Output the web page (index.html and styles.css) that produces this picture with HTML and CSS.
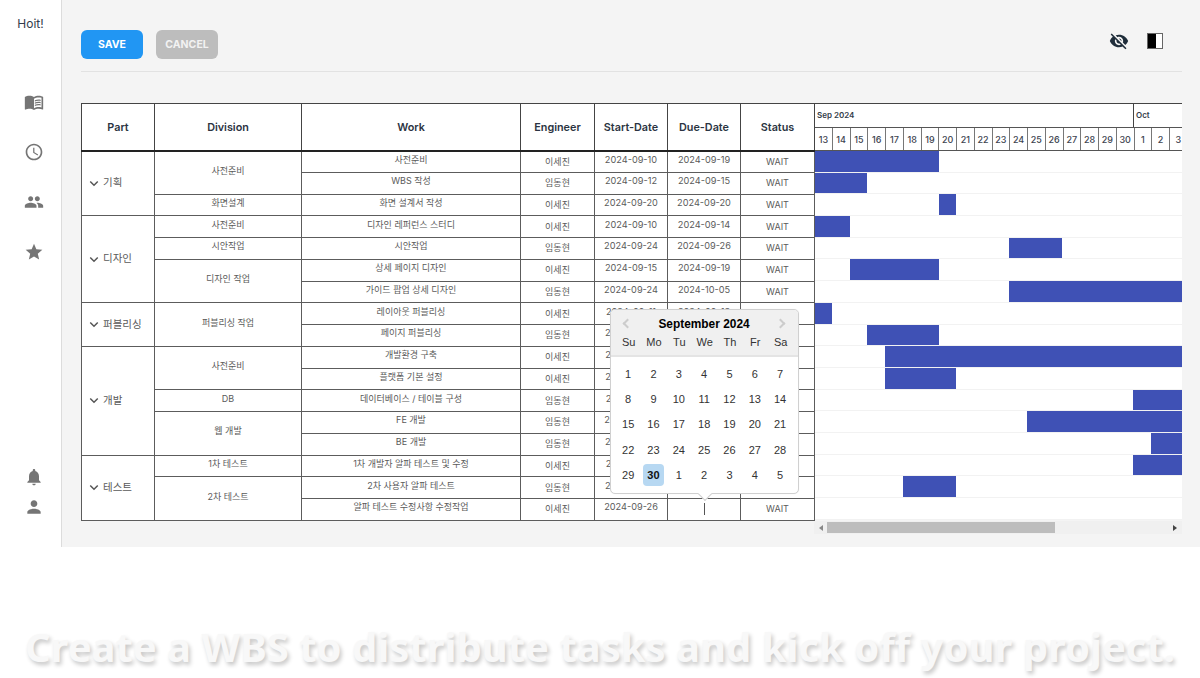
FILE: index.html
```html
<!DOCTYPE html>
<html lang="ko">
<head>
<meta charset="utf-8">
<title>Hoit! WBS</title>
<link rel="stylesheet" href="styles.css">
</head>
<body>
<div class="app">
  <aside class="sidebar">
    <div class="logo">Hoit!</div>
    <nav class="nav-top">
      <svg class="ico" viewBox="0 0 24 24"><path d="M21 5c-1.11-.35-2.33-.5-3.5-.5-1.95 0-4.05.4-5.5 1.5-1.45-1.1-3.55-1.5-5.5-1.5S2.45 4.9 1 6v14.65c0 .25.25.5.5.5.1 0 .15-.05.25-.05C3.1 20.45 5.05 20 6.5 20c1.95 0 4.05.4 5.5 1.5 1.35-.85 3.8-1.5 5.5-1.5 1.65 0 3.35.3 4.75 1.05.1.05.15.05.25.05.25 0 .5-.25.5-.5V6c-.6-.45-1.25-.75-2-1zm0 13.5c-1.1-.35-2.3-.5-3.5-.5-1.7 0-4.15.65-5.5 1.5V8c1.35-.85 3.8-1.5 5.5-1.5 1.2 0 2.4.15 3.5.5v11.5z"/><path d="M17.5 10.5c.88 0 1.73.09 2.5.26V9.24c-.79-.15-1.64-.24-2.5-.24-1.7 0-3.24.29-4.5.83v1.66c1.13-.64 2.7-.99 4.5-.99zM13 12.49v1.66c1.13-.64 2.7-.99 4.5-.99.88 0 1.73.09 2.5.26V11.9c-.79-.15-1.64-.24-2.5-.24-1.7 0-3.24.3-4.5.83zM17.5 14.33c-1.7 0-3.24.29-4.5.83v1.66c1.13-.64 2.7-.99 4.5-.99.88 0 1.73.09 2.5.26v-1.52c-.79-.16-1.64-.24-2.5-.24z"/></svg>
      <svg class="ico" viewBox="0 0 24 24"><path d="M11.99 2C6.47 2 2 6.48 2 12s4.47 10 9.99 10C17.52 22 22 17.52 22 12S17.52 2 11.99 2zM12 20c-4.42 0-8-3.58-8-8s3.58-8 8-8 8 3.58 8 8-3.58 8-8 8z"/><path d="M12.5 7H11v6l5.25 3.15.75-1.23-4.5-2.67z"/></svg>
      <svg class="ico" viewBox="0 0 24 24"><path d="M16 11c1.66 0 2.99-1.34 2.99-3S17.66 5 16 5c-1.66 0-3 1.34-3 3s1.34 3 3 3zm-8 0c1.66 0 2.99-1.34 2.99-3S9.66 5 8 5C6.34 5 5 6.34 5 8s1.34 3 3 3zm0 2c-2.33 0-7 1.17-7 3.5V19h14v-2.5c0-2.33-4.67-3.5-7-3.5zm8 0c-.29 0-.62.02-.97.05 1.16.84 1.97 1.97 1.97 3.45V19h6v-2.5c0-2.33-4.67-3.5-7-3.5z"/></svg>
      <svg class="ico" viewBox="0 0 24 24"><path d="M12 17.27 18.18 21l-1.64-7.03L22 9.24l-7.19-.61L12 2 9.19 8.63 2 9.24l5.46 4.73L5.82 21z"/></svg>
    </nav>
    <div class="nav-bottom">
      <svg class="ico" viewBox="0 0 24 24"><path d="M12 22c1.1 0 2-.9 2-2h-4c0 1.1.89 2 2 2zm6-6v-5c0-3.07-1.64-5.64-4.5-6.32V4c0-.83-.67-1.5-1.5-1.5s-1.5.67-1.5 1.5v.68C7.63 5.36 6 7.92 6 11v5l-2 2v1h16v-1l-2-2z"/></svg>
      <svg class="ico" viewBox="0 0 24 24"><path d="M12 12c2.21 0 4-1.79 4-4s-1.79-4-4-4-4 1.79-4 4 1.79 4 4 4zm0 2c-2.67 0-8 1.34-8 4v2h16v-2c0-2.66-5.33-4-8-4z"/></svg>
    </div>
  </aside>

  <main class="main">
    <header class="toolbar">
      <div class="actions">
        <button class="btn btn-save">SAVE</button>
        <button class="btn btn-cancel">CANCEL</button>
      </div>
      <div class="tools">
        <svg class="tool-eye" viewBox="0 0 24 24"><path d="M12 7c2.76 0 5 2.24 5 5 0 .65-.13 1.26-.36 1.83l2.92 2.92c1.51-1.26 2.7-2.89 3.43-4.75-1.73-4.39-6-7.5-11-7.5-1.4 0-2.74.25-3.98.7l2.16 2.16C10.74 7.13 11.35 7 12 7zM2 4.27l2.28 2.28.46.46C3.08 8.3 1.78 10.02 1 12c1.73 4.39 6 7.5 11 7.5 1.55 0 3.03-.3 4.38-.84l.42.42L19.73 22 21 20.73 3.27 3 2 4.27zM7.53 9.8l1.55 1.55c-.05.21-.08.43-.08.65 0 1.66 1.34 3 3 3 .22 0 .44-.03.65-.08l1.55 1.55c-.67.33-1.41.53-2.2.53-2.76 0-5-2.24-5-5 0-.79.2-1.53.53-2.2zm4.31-.78 3.15 3.15.02-.16c0-1.66-1.34-3-3-3l-.17.01z"/></svg>
        <div class="tool-split"><span class="tool-split-fill"></span></div>
      </div>
    </header>

    <section class="board">
      <table class="wbs">
        <colgroup>
          <col class="c-part"><col class="c-div"><col class="c-work"><col class="c-eng"><col class="c-date"><col class="c-date"><col class="c-status">
        </colgroup>
        <thead>
          <tr><th>Part</th><th>Division</th><th>Work</th><th>Engineer</th><th>Start-Date</th><th>Due-Date</th><th>Status</th></tr>
        </thead>
        <tbody>
          <tr><td class="part" rowspan="3"><span class="part-in"><svg class="chev" viewBox="0 0 12 8"><path d="M1.5 1.5 6 6l4.5-4.5"/></svg>기획</span></td><td class="up" rowspan="2">사전준비</td><td class="up">사전준비</td><td>이세진</td><td class="up date">2024-09-10</td><td class="up date">2024-09-19</td><td class="st">WAIT</td></tr>
          <tr><td class="up">WBS 작성</td><td>임동현</td><td class="up date">2024-09-12</td><td class="up date">2024-09-15</td><td class="st">WAIT</td></tr>
          <tr><td class="up">화면설계</td><td class="up">화면 설계서 작성</td><td>이세진</td><td class="up date">2024-09-20</td><td class="up date">2024-09-20</td><td class="st">WAIT</td></tr>
          <tr><td class="part" rowspan="4"><span class="part-in"><svg class="chev" viewBox="0 0 12 8"><path d="M1.5 1.5 6 6l4.5-4.5"/></svg>디자인</span></td><td class="up">사전준비</td><td class="up">디자인 레퍼런스 스터디</td><td>이세진</td><td class="up date">2024-09-10</td><td class="up date">2024-09-14</td><td class="st">WAIT</td></tr>
          <tr><td class="up">시안작업</td><td class="up">시안작업</td><td>임동현</td><td class="up date">2024-09-24</td><td class="up date">2024-09-26</td><td class="st">WAIT</td></tr>
          <tr><td class="up" rowspan="2">디자인 작업</td><td class="up">상세 페이지 디자인</td><td>이세진</td><td class="up date">2024-09-15</td><td class="up date">2024-09-19</td><td class="st">WAIT</td></tr>
          <tr><td class="up">가이드 팝업 상세 디자인</td><td>임동현</td><td class="up date">2024-09-24</td><td class="up date">2024-10-05</td><td class="st">WAIT</td></tr>
          <tr><td class="part" rowspan="2"><span class="part-in"><svg class="chev" viewBox="0 0 12 8"><path d="M1.5 1.5 6 6l4.5-4.5"/></svg>퍼블리싱</span></td><td class="up" rowspan="2">퍼블리싱 작업</td><td class="up">레이아웃 퍼블리싱</td><td>이세진</td><td class="up date">2024-09-11</td><td class="up date">2024-09-13</td><td class="st">WAIT</td></tr>
          <tr><td class="up">페이지 퍼블리싱</td><td>임동현</td><td class="up date">2024-09-16</td><td class="up date">2024-09-19</td><td class="st">WAIT</td></tr>
          <tr><td class="part" rowspan="5"><span class="part-in"><svg class="chev" viewBox="0 0 12 8"><path d="M1.5 1.5 6 6l4.5-4.5"/></svg>개발</span></td><td class="up" rowspan="2">사전준비</td><td class="up">개발환경 구축</td><td>이세진</td><td class="up date">2024-09-17</td><td class="up date">2024-10-10</td><td class="st">WAIT</td></tr>
          <tr><td class="up">플랫폼 기본 설정</td><td>이세진</td><td class="up date">2024-09-17</td><td class="up date">2024-09-20</td><td class="st">WAIT</td></tr>
          <tr><td class="up">DB</td><td class="up">데이터베이스 / 테이블 구성</td><td>임동현</td><td class="up date">2024-10-01</td><td class="up date">2024-10-10</td><td class="st">WAIT</td></tr>
          <tr><td class="up" rowspan="2">웹 개발</td><td class="up">FE 개발</td><td>임동현</td><td class="up date">2024-09-25</td><td class="up date">2024-10-10</td><td class="st">WAIT</td></tr>
          <tr><td class="up">BE 개발</td><td>임동현</td><td class="up date">2024-10-02</td><td class="up date">2024-10-10</td><td class="st">WAIT</td></tr>
          <tr><td class="part" rowspan="3"><span class="part-in"><svg class="chev" viewBox="0 0 12 8"><path d="M1.5 1.5 6 6l4.5-4.5"/></svg>테스트</span></td><td class="up">1차 테스트</td><td class="up">1차 개발자 알파 테스트 및 수정</td><td>이세진</td><td class="up date">2024-10-01</td><td class="up date">2024-10-10</td><td class="st">WAIT</td></tr>
          <tr><td class="up" rowspan="2">2차 테스트</td><td class="up">2차 사용자 알파 테스트</td><td>임동현</td><td class="up date">2024-09-18</td><td class="up date">2024-09-20</td><td class="st">WAIT</td></tr>
          <tr><td class="up">알파 테스트 수정사항 수정작업</td><td>이세진</td><td class="up date">2024-09-26</td><td class="up date"><span class="caret"></span></td><td class="st">WAIT</td></tr>
        </tbody>
      </table>

      <div class="gantt">
        <div class="g-head">
          <div class="g-months">
            <div class="g-sep">Sep 2024</div>
            <div class="g-oct">Oct</div>
          </div>
          <div class="g-days">
            <span>13</span><span>14</span><span>15</span><span>16</span><span>17</span><span>18</span><span>19</span><span>20</span><span>21</span><span>22</span><span>23</span><span>24</span><span>25</span><span>26</span><span>27</span><span>28</span><span>29</span><span>30</span><span>1</span><span>2</span><span>3</span>
          </div>
        </div>
        <div class="g-body">
          <div class="g-row"><i class="bar" style="margin-left:0;width:125px"></i></div>
          <div class="g-row"><i class="bar" style="margin-left:0;width:53px"></i></div>
          <div class="g-row"><i class="bar" style="margin-left:125px;width:17px"></i></div>
          <div class="g-row"><i class="bar" style="margin-left:0;width:36px"></i></div>
          <div class="g-row"><i class="bar" style="margin-left:195px;width:53px"></i></div>
          <div class="g-row"><i class="bar" style="margin-left:36px;width:89px"></i></div>
          <div class="g-row"><i class="bar" style="margin-left:195px;width:173px"></i></div>
          <div class="g-row"><i class="bar" style="margin-left:0;width:18px"></i></div>
          <div class="g-row"><i class="bar" style="margin-left:53px;width:72px"></i></div>
          <div class="g-row"><i class="bar" style="margin-left:71px;width:297px"></i></div>
          <div class="g-row"><i class="bar" style="margin-left:71px;width:71px"></i></div>
          <div class="g-row"><i class="bar" style="margin-left:319px;width:49px"></i></div>
          <div class="g-row"><i class="bar" style="margin-left:213px;width:155px"></i></div>
          <div class="g-row"><i class="bar" style="margin-left:337px;width:31px"></i></div>
          <div class="g-row"><i class="bar" style="margin-left:319px;width:49px"></i></div>
          <div class="g-row"><i class="bar" style="margin-left:89px;width:53px"></i></div>
          <div class="g-row"></div>
        </div>
        <div class="scrollbar">
          <span class="sb-arrow sb-left"></span>
          <div class="sb-track"><div class="sb-thumb"></div></div>
          <span class="sb-arrow sb-right"></span>
        </div>
      </div>

      <div class="picker">
        <div class="picker-head">
          <div class="picker-title">
            <span class="pk-nav pk-prev"></span>
            <span>September 2024</span>
            <span class="pk-nav pk-next"></span>
          </div>
          <div class="pk-week"><span>Su</span><span>Mo</span><span>Tu</span><span>We</span><span>Th</span><span>Fr</span><span>Sa</span></div>
        </div>
        <div class="pk-grid">
          <span>1</span><span>2</span><span>3</span><span>4</span><span>5</span><span>6</span><span>7</span>
          <span>8</span><span>9</span><span>10</span><span>11</span><span>12</span><span>13</span><span>14</span>
          <span>15</span><span>16</span><span>17</span><span>18</span><span>19</span><span>20</span><span>21</span>
          <span>22</span><span>23</span><span>24</span><span>25</span><span>26</span><span>27</span><span>28</span>
          <span>29</span><span class="pk-sel">30</span><span>1</span><span>2</span><span>3</span><span>4</span><span>5</span>
        </div>
        <span class="pk-tip"></span>
      </div>
    </section>
  </main>
</div>
<footer class="caption">Create a WBS to distribute tasks and kick off your project.</footer>
</body>
</html>
```
FILE: styles.css
```css
* { box-sizing: border-box; }
html, body { margin: 0; padding: 0; background: #fff; }
body { width: 1200px; height: 678px; overflow: hidden; font-family: Inter, "Noto Sans CJK KR", sans-serif; color: #333; }

.app { display: flex; height: 547px; }

.sidebar { width: 62px; flex: none; background: #fff; border-right: 1px solid #dcdcdc; display: flex; flex-direction: column; align-items: center; padding-top: 15px; padding-bottom: 30px; }
.logo { font-size: 12px; line-height: 18px; color: #333c4a; }
.nav-top { display: flex; flex-direction: column; align-items: center; gap: 30px; margin-top: 59px; padding-left: 6px; }
.nav-bottom { display: flex; flex-direction: column; align-items: center; gap: 10px; margin-top: auto; padding-left: 6px; }
.ico { width: 20px; height: 20px; fill: #757575; display: block; }

.main { flex: 1; min-width: 0; background: #f4f4f4; padding: 0 18px 0 19px; }
.toolbar { height: 72px; border-bottom: 1px solid #e2e2e2; display: flex; justify-content: space-between; align-items: flex-start; padding-top: 30px; }
.actions { display: flex; gap: 13px; }
.btn { width: 62px; height: 29px; border: 0; border-radius: 6px; font: 700 10.5px Inter, sans-serif; color: #fff; padding: 0; }
.btn-save { background: #2196f3; }
.btn-cancel { background: #bdbdbd; color: #f2f2f2; }
.tools { display: flex; align-items: center; gap: 18px; padding-right: 19px; margin-top: 1px; }
.tool-eye { width: 20px; height: 20px; fill: #1f2d3a; display: block; }
.tool-split { width: 16px; height: 16px; border: 1px solid #666; background: #fff; display: flex; }
.tool-split-fill { width: 8px; background: #000; }

.board { position: relative; display: flex; align-items: flex-start; margin-top: 31px; }

.wbs { position: relative; z-index: 1; width: 733px; flex: none; border-collapse: collapse; table-layout: fixed; background: #fff; }
.c-part { width: 73px; } .c-div { width: 147px; } .c-work { width: 219px; } .c-eng { width: 74px; } .c-date { width: 73px; } .c-status { width: 74px; }
.wbs th { height: 47px; border: 1px solid #444; border-bottom: 2px solid #222; font-size: 10.8px; font-weight: 600; color: #2b3442; padding: 1px 0 0; text-align: center; }
.wbs td { height: 21.75px; border: 1px solid #5c5c5c; padding: 0; font-size: 9px; line-height: 12px; color: #5a5a5a; text-align: center; overflow: hidden; white-space: nowrap; }
.wbs td.up { padding-bottom: 4px; }
.wbs td.date { font-size: 9.2px; }
.wbs td.st { font-size: 9px; }
.wbs td.part { text-align: left; font-size: 10.5px; padding-left: 7px; }
.part-in { display: flex; align-items: center; gap: 4px; }
.chev { width: 10px; height: 7px; fill: none; stroke: #555; stroke-width: 1.8; flex: none; }
.caret { display: inline-block; width: 1px; height: 12px; background: #555; vertical-align: middle; margin-top: 4px; }

.gantt { width: 368px; flex: none; margin-left: -1px; }
.g-head { height: 48px; background: #fff; border-top: 1px solid #444; }
.g-months { height: 24px; display: flex; border-bottom: 1px solid #555; font-size: 8px; font-weight: 600; color: #333c4a; }
.g-sep { width: 320px; padding: 6px 0 0 3px; border-right: 1px solid #444; }
.g-oct { flex: 1; padding: 6px 0 0 2px; }
.g-days { height: 23px; display: grid; grid-template-columns: repeat(21, 17.75px); padding-left: 1px; border-bottom: 1px solid #555; overflow: hidden; }
.g-days span { font-size: 9px; font-weight: 500; color: #3d4450; border-right: 1px solid #777; display: flex; align-items: center; justify-content: center; }
.g-body { background: #fff; height: 369px; }
.g-row { height: 21.7px; border-bottom: 1px solid #f2f2f2; display: flex; }
.bar { display: block; height: 100%; background: #3f51b5; }

.scrollbar { height: 13px; margin-top: 1px; background: #f0f0f0; display: flex; align-items: center; }
.sb-arrow { width: 0; height: 0; border-top: 3px solid transparent; border-bottom: 3px solid transparent; flex: none; }
.sb-left { border-right: 4px solid #888; margin-left: 5px; margin-right: 4px; }
.sb-right { border-left: 4px solid #444; margin-left: 4px; margin-right: 5px; }
.sb-track { flex: 1; height: 11px; }
.sb-thumb { width: 228px; height: 100%; background: #bdbdbd; }

.picker { position: absolute; z-index: 2; left: 529px; top: 206px; width: 189px; height: 185px; background: #fff; border: 1px solid #d0d0d0; border-radius: 5px; font-family: "Liberation Sans", sans-serif; box-shadow: 0 0 1px rgba(0,0,0,.1); }
.picker-head { height: 47px; background: #f0f0f0; border-bottom: 2px solid #e4e4e4; border-radius: 4px 4px 0 0; }
.picker-title { display: flex; justify-content: space-between; align-items: center; height: 24px; padding: 3px 14px 0 13px; font-size: 11.9px; font-weight: 700; color: #000; }
.pk-nav { width: 7px; height: 7px; border-top: 2px solid #ccc; border-left: 2px solid #ccc; }
.pk-prev { transform: rotate(-45deg); }
.pk-next { transform: rotate(135deg); }
.pk-week { display: grid; grid-template-columns: repeat(7, 25.33px); padding: 0 5px 0 5px; font-size: 11px; color: #333; line-height: 16px; text-align: center; }
.pk-grid { display: grid; grid-template-columns: repeat(7, 25.33px); grid-auto-rows: 25.33px; padding: 4px 6px 0 4px; font-size: 11px; color: #333; }
.pk-grid span { display: flex; align-items: center; justify-content: center; border-radius: 4px; margin: 2px 2px 2px 3px; }
.pk-sel { background: #b7d8f2; font-weight: 700; color: #111; }
.pk-tip { position: absolute; left: 89px; bottom: -6px; width: 10px; height: 10px; background: #fff; border-right: 1px solid #d0d0d0; border-bottom: 1px solid #d0d0d0; transform: rotate(45deg); }

.caption { height: 131px; padding-top: 77px; text-align: center; font-family: "Noto Sans", sans-serif; font-weight: 700; font-size: 40px; line-height: 46px; color: #f8f8f8; text-shadow: 2px 3px 4px rgba(0,0,0,.22); white-space: nowrap; }
```
